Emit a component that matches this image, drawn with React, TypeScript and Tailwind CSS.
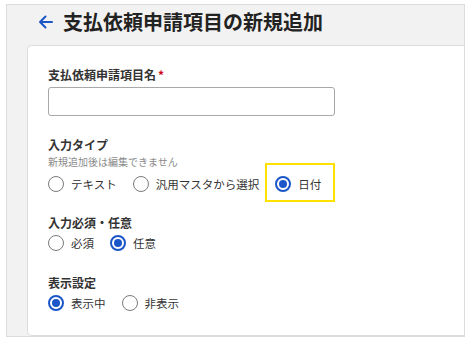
import React from 'react';

const font = { fontFamily: '"Noto Sans CJK JP", "Noto Sans", sans-serif' };

function Radio({ label, checked }: { label: string; checked?: boolean }) {
  return (
    <span className="flex items-center gap-[7px] mr-[16px]">
      {checked ? (
        <span className="w-[16px] h-[16px] rounded-full border-[2px] border-[#1a56c8] flex items-center justify-center">
          <span className="w-[8px] h-[8px] rounded-full bg-[#1a56c8]" />
        </span>
      ) : (
        <span className="w-[16px] h-[16px] rounded-full border-[1.5px] border-[#7a7a7a]" />
      )}
      <span className="text-[11.5px] leading-[20px] text-[#333]">{label}</span>
    </span>
  );
}

export default function App() {
  return (
    <div className="w-[471px] h-[344px] bg-white pt-[4px] px-[6px]" style={font}>
      <div className="h-[333px] border border-[#dcdcdc] bg-[#f2f2f2] flex flex-col">
        <div className="h-[40px] pb-[6px] flex items-center pl-[31px]">
          <svg width="15" height="14" viewBox="0 0 15 14" fill="none" stroke="#1a56c8" strokeWidth="2" strokeLinecap="round" strokeLinejoin="round">
            <path d="M14 7H2M7.5 1.5L2 7l5.5 5.5" />
          </svg>
          <h1 className="ml-[10px] text-[20px] font-bold text-[#222] leading-[26px]">支払依頼申請項目の新規追加</h1>
        </div>
        <div className="ml-[20px] flex-1 bg-white border-t border-l border-b border-[#dcdcdc] rounded-tl-[5px] rounded-bl-[5px] pl-[20px] pt-[21px]">
          <div className="text-[12px] leading-[16px] font-bold text-[#333]">
            支払依頼申請項目名<span className="text-[#d0021b] ml-[2px]">*</span>
          </div>
          <div className="mt-[4px] w-[287px] h-[29px] border border-[#a8a8a8] rounded-[3px] bg-white" />

          <div className="mt-[21px] text-[12px] leading-[16px] font-bold text-[#333]">入力タイプ</div>
          <div className="mt-[2px] text-[10px] leading-[14px] text-[#8a8a8a]">新規追加後は編集できません</div>
          <div className="mt-[5px] flex items-center h-[20px]">
            <Radio label="テキスト" />
            <Radio label="汎用マスタから選択" />
            <span className="relative">
              <span className="absolute left-[-10px] top-[-11px] w-[70px] h-[39px] border-[2px] border-[#ffe100]" />
              <Radio label="日付" checked />
            </span>
          </div>

          <div className="mt-[21px] text-[12px] leading-[16px] font-bold text-[#333]">入力必須・任意</div>
          <div className="mt-[2px] flex items-center h-[20px]">
            <Radio label="必須" />
            <Radio label="任意" checked />
          </div>

          <div className="mt-[22px] text-[12px] leading-[16px] font-bold text-[#333]">表示設定</div>
          <div className="mt-[2px] flex items-center h-[20px]">
            <Radio label="表示中" checked />
            <Radio label="非表示" />
          </div>
        </div>
      </div>
    </div>
  );
}
